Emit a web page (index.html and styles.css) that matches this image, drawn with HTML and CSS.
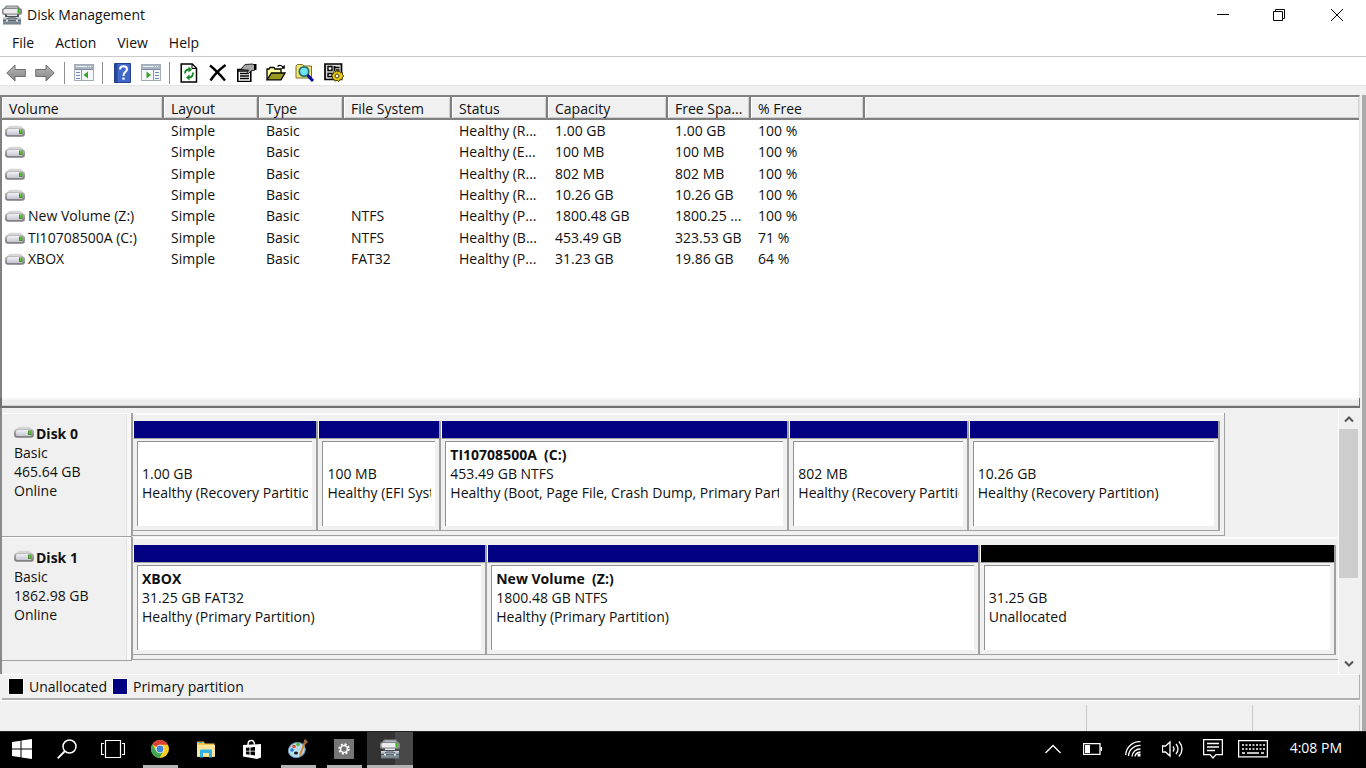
FILE: index.html
```html
<!DOCTYPE html>
<html lang="en">
<head>
<meta charset="utf-8">
<title>Disk Management</title>
<link rel="stylesheet" href="styles.css">
</head>
<body>
<svg class="defs" aria-hidden="true">
  <defs>
    <linearGradient id="metal" x1="0" y1="0" x2="0" y2="1">
      <stop offset="0" stop-color="#f0f0f6"/><stop offset="1" stop-color="#c6c6d2"/>
    </linearGradient>
    <linearGradient id="rim" x1="0" y1="0" x2="0" y2="1">
      <stop offset="0" stop-color="#b4b4b6"/><stop offset="1" stop-color="#7c7c80"/>
    </linearGradient>
    <linearGradient id="steel" x1="0" y1="0" x2="0" y2="1">
      <stop offset="0" stop-color="#a9b6bf"/><stop offset="1" stop-color="#6d7b85"/>
    </linearGradient>
    <linearGradient id="arrow" x1="0" y1="0" x2="0" y2="1">
      <stop offset="0" stop-color="#b8b8b8"/><stop offset="1" stop-color="#858585"/>
    </linearGradient>
    <symbol id="drive" viewBox="0 0 20 12">
      <path d="M1 5Q3 .8 6 .8h8q3 0 5 4.200z" fill="#d6d6d6"/>
      <rect x="0" y="3.200" width="20" height="8.500" rx="3" fill="url(#rim)"/>
      <rect x="2" y="4" width="15.500" height="6" rx="1.500" fill="url(#metal)"/>
      <path d="M14 4.500h3.500V9H14z" fill="#4b8a35"/><path d="M15 5h1.500v3H15z" fill="#58cc2c"/>
    </symbol>
    <symbol id="diskmgmt" viewBox="0 0 20 20">
      <path d="M4 .5h12l3 4H1z" fill="#83888b"/>
      <path d="M5 1.500h10l1 1.500H4z" fill="#b5babc"/>
      <rect x="0" y="3" width="20" height="7" rx="2.500" fill="#85888b"/>
      <rect x="1.500" y="4" width="16.500" height="4.500" rx="1.500" fill="#ececef"/>
      <path d="M15.500 4h2.200v4.500h-2.200z" fill="#35b512"/>
      <path d="M3 9.500h14v3H3z" fill="#4a5156"/><path d="M5 9.500h10v1.500H5z" fill="#e3e8eb"/>
      <path d="M1 12h18v7.500H1z" fill="url(#steel)"/>
      <path d="M1 12h18v1.500H1z" fill="#cbd5db"/>
      <path d="M5 15q0-2 2-2h6q2 0 2 2" fill="none" stroke="#3c464d"/>
      <path d="M1 15.500h18" stroke="#56626b"/>
      <path d="M4 14.500h2v2H4zM14 14.500h2v2h-2z" fill="#e0e8ed"/>
    </symbol>
    <symbol id="console" viewBox="0 0 20 17">
      <rect x="0.5" y="0.5" width="19" height="16" fill="#f5f7fa" stroke="#a3abb6"/>
      <path d="M1 1h18v4H1z" fill="#a9b4c3"/><path d="M2 2.5h11" stroke="#e9eef4"/><path d="M14 2.5h1m1 0h1" stroke="#fff"/>
      <path d="M1 5.5h18" stroke="#808c9d"/>
    </symbol>
  </defs>
</svg>
<main class="window">
  <header class="titlebar">
    <svg class="app-icon"><use href="#diskmgmt"/></svg>
    <h1 class="title">Disk Management</h1>
    <div class="caption">
      <button class="cap" aria-label="Minimize"><svg viewBox="0 0 12 12"><path d="M0 5.500h12"/></svg></button>
      <button class="cap" aria-label="Restore"><svg viewBox="0 0 12 12"><path d="M.5 2.5h9v9h-9zM2.5 2.5v-2h9v9h-2"/></svg></button>
      <button class="cap" aria-label="Close"><svg viewBox="0 0 12 12"><path d="M0 0l12 12M12 0L0 12"/></svg></button>
    </div>
  </header>
  <nav class="menubar">
    <button>File</button><button>Action</button><button>View</button><button>Help</button>
  </nav>
  <div class="toolbar" role="toolbar">
    <button class="tool" aria-label="Back"><svg width="20" height="18" viewBox="0 0 20 18"><path d="M.8 9L9 1v4.500h10.300v7H9V17z" fill="url(#arrow)" stroke="#707070"/></svg></button>
    <button class="tool" aria-label="Forward"><svg width="20" height="18" viewBox="0 0 20 18"><path d="M19.200 9L11 1v4.500H.7v7H11V17z" fill="url(#arrow)" stroke="#707070"/></svg></button>
    <span class="sep"></span>
    <button class="tool" aria-label="Show or hide console tree"><svg width="20" height="17" viewBox="0 0 20 17"><use href="#console"/><path d="M7.500 6v10" stroke="#8c98a8"/><path d="M2 8.500h4M2 11.500h4M2 14.500h4" stroke="#6d8cb5"/><path d="M14 7.500v7L9.500 11z" fill="#37a52c"/></svg></button>
    <span class="sep"></span>
    <button class="tool" aria-label="Help"><svg width="17" height="20" viewBox="0 0 17 20"><path d="M.5.500h16v19H.500z" fill="#4067cb" stroke="#24418e"/><path d="M1 1h2.500v18H1z" fill="#27479b"/><path d="M6 6.500Q6 3.200 9.500 3.200T13 6.300Q13 8 11 9.300 9.500 10.500 9.500 13" fill="none" stroke="#fff" stroke-width="2"/><path d="M8.400 14.500h2.200v2.200H8.400z" fill="#fff"/></svg></button>
    <button class="tool" aria-label="Show or hide action pane"><svg width="20" height="17" viewBox="0 0 20 17"><use href="#console"/><path d="M12.500 6v10" stroke="#8c98a8"/><path d="M14 8.500h4M14 11.500h4M14 14.500h4" stroke="#6d8cb5"/><path d="M5.500 7.500v7L10 11z" fill="#37a52c"/></svg></button>
    <span class="sep"></span>
    <button class="tool" aria-label="Refresh"><svg width="18" height="20" viewBox="0 0 18 20"><path d="M1.200 1h11l4.300 4.300V19H1.200z" fill="#fff" stroke="#000" stroke-width="1.500"/><path d="M12 1v4.500h4.500" fill="none" stroke="#000"/><path d="M5 10.500Q5 6.500 9 6.500M13 9.500Q13 14.500 9 14.500" fill="none" stroke="#118a22" stroke-width="1.800"/><path d="M8.500 3.500v6l3.500-3zM9.500 11.500v6l-3.500-3z" fill="#118a22"/></svg></button>
    <button class="tool" aria-label="Delete"><svg width="18" height="18" viewBox="0 0 18 18"><path d="M1 1.500Q8 7 16 16.500M16.500 1Q7 8 1.500 16.500" fill="none" stroke="#000" stroke-width="2.400"/></svg></button>
    <button class="tool" aria-label="Properties"><svg width="20" height="19" viewBox="0 0 20 19"><path d="M.8 6.500h13v12H.8z" fill="#fff" stroke="#000" stroke-width="1.600"/><path d="M1 8h12.500M3 10.500h9M3 13h9M3 15.500h9" stroke="#000" stroke-width="1.700"/><path d="M4 6l4-4.500 8-.5 2 2v4l-4 1-3 3-1-1 1.500-3H8z" fill="#a8a8a8" stroke="#222"/><path d="M17 1h2.500v6H17z" fill="#000"/></svg></button>
    <button class="tool" aria-label="Open"><svg width="20" height="17" viewBox="0 0 20 17"><path d="M1 15.500V5h2l1-1.500h4L9 5h6v4" fill="#ffffa0" stroke="#000" stroke-width="1.300"/><path d="M1 15.800L5.500 9H19l-4 6.800z" fill="#9a9820" stroke="#000" stroke-width="1.300"/><path d="M11.500 2.500Q14 0 17 3" fill="none" stroke="#000" stroke-width="1.300"/><path d="M18.800.8v4h-4z"/></svg></button>
    <button class="tool" aria-label="Rescan disks"><svg width="20" height="19" viewBox="0 0 20 19"><path d="M1 15V3l1.500-1.500h5L9 3h7.500v12z" fill="#f4e676" stroke="#77702c"/><circle cx="9" cy="8.500" r="4.700" fill="#6fe6ee" stroke="#266c77" stroke-width="1.700"/><path d="M12.500 12l5.500 6" stroke="#0c0ca0" stroke-width="3"/></svg></button>
    <button class="tool" aria-label="More settings"><svg width="20" height="19" viewBox="0 0 20 19"><path d="M1 1h16.500v15.500H1z" fill="#d9d9d9" stroke="#000" stroke-width="1.700"/><path d="M4 3.500h4v4H4zM4 10.500h4v3H4z" fill="#fff" stroke="#000" stroke-width="1.400"/><path d="M10.500 3v5M10.500 4.500h5M12 7h3.500" stroke="#000" stroke-width="1.700"/><path d="M12.300 7l1 2 2-.800 1.200 1.600 2-.300v2.200l1.300 1.300-1.300 1.300-.500 2.200-2 0-1.300 2-1.700-1.300-2 1-1-2-2-.500.600-2-1-1.700 1.800-1.200 0-2 2 .200z" fill="#e6c81a" stroke="#4a4000" stroke-width="1"/><circle cx="13" cy="13" r="1.900" fill="#fff" stroke="#4a4000"/></svg></button>
  </div>

  <div class="content">
    <section class="volumes" aria-label="Volumes">
      <table class="vol-table">
        <colgroup><col class="c-volume"><col class="c-layout"><col class="c-type"><col class="c-fs"><col class="c-status"><col class="c-cap"><col class="c-free"><col class="c-pct"><col></colgroup>
        <thead><tr><th>Volume</th><th>Layout</th><th>Type</th><th>File System</th><th>Status</th><th>Capacity</th><th>Free Spa...</th><th>% Free</th><th></th></tr></thead>
        <tbody>
          <tr><td class="name"><svg class="drive"><use href="#drive"/></svg></td><td>Simple</td><td>Basic</td><td></td><td>Healthy (R...</td><td>1.00 GB</td><td>1.00 GB</td><td>100 %</td><td></td></tr>
          <tr><td class="name"><svg class="drive"><use href="#drive"/></svg></td><td>Simple</td><td>Basic</td><td></td><td>Healthy (E...</td><td>100 MB</td><td>100 MB</td><td>100 %</td><td></td></tr>
          <tr><td class="name"><svg class="drive"><use href="#drive"/></svg></td><td>Simple</td><td>Basic</td><td></td><td>Healthy (R...</td><td>802 MB</td><td>802 MB</td><td>100 %</td><td></td></tr>
          <tr><td class="name"><svg class="drive"><use href="#drive"/></svg></td><td>Simple</td><td>Basic</td><td></td><td>Healthy (R...</td><td>10.26 GB</td><td>10.26 GB</td><td>100 %</td><td></td></tr>
          <tr><td class="name"><svg class="drive"><use href="#drive"/></svg>New Volume (Z:)</td><td>Simple</td><td>Basic</td><td>NTFS</td><td>Healthy (P...</td><td>1800.48 GB</td><td>1800.25 ...</td><td>100 %</td><td></td></tr>
          <tr><td class="name"><svg class="drive"><use href="#drive"/></svg>TI10708500A (C:)</td><td>Simple</td><td>Basic</td><td>NTFS</td><td>Healthy (B...</td><td>453.49 GB</td><td>323.53 GB</td><td>71 %</td><td></td></tr>
          <tr><td class="name"><svg class="drive"><use href="#drive"/></svg>XBOX</td><td>Simple</td><td>Basic</td><td>FAT32</td><td>Healthy (P...</td><td>31.23 GB</td><td>19.86 GB</td><td>64 %</td><td></td></tr>
        </tbody>
      </table>
    </section>
    <div class="splitter"></div>
    <section class="disks" aria-label="Disks">
      <div class="disk-list">
        <article class="disk">
          <div class="disk-label"><h2><svg class="drive"><use href="#drive"/></svg>Disk 0</h2><p>Basic</p><p>465.64 GB</p><p>Online</p></div>
          <div class="track"><div class="parts" style="width:90.6%">
            <div class="part" style="flex-grow:185"><div class="bar"></div><div class="box"><p class="vol"></p><p>1.00 GB</p><p>Healthy (Recovery Partition)</p></div></div>
            <div class="part" style="flex-grow:122"><div class="bar"></div><div class="box"><p class="vol"></p><p>100 MB</p><p>Healthy (EFI System Partition)</p></div></div>
            <div class="part" style="flex-grow:349"><div class="bar"></div><div class="box"><p class="vol">TI10708500A&nbsp; (C:)</p><p>453.49 GB NTFS</p><p>Healthy (Boot, Page File, Crash Dump, Primary Partition)</p></div></div>
            <div class="part" style="flex-grow:179"><div class="bar"></div><div class="box"><p class="vol"></p><p>802 MB</p><p>Healthy (Recovery Partition)</p></div></div>
            <div class="part" style="flex-grow:251"><div class="bar"></div><div class="box"><p class="vol"></p><p>10.26 GB</p><p>Healthy (Recovery Partition)</p></div></div>
          </div></div>
        </article>
        <article class="disk">
          <div class="disk-label"><h2><svg class="drive"><use href="#drive"/></svg>Disk 1</h2><p>Basic</p><p>1862.98 GB</p><p>Online</p></div>
          <div class="track"><div class="parts open" style="width:100%">
            <div class="part" style="flex-grow:354"><div class="bar"></div><div class="box"><p class="vol">XBOX</p><p>31.25 GB FAT32</p><p>Healthy (Primary Partition)</p></div></div>
            <div class="part" style="flex-grow:493"><div class="bar"></div><div class="box"><p class="vol">New Volume&nbsp; (Z:)</p><p>1800.48 GB NTFS</p><p>Healthy (Primary Partition)</p></div></div>
            <div class="part" style="flex-grow:356"><div class="bar free"></div><div class="box"><p class="vol"></p><p>31.25 GB</p><p>Unallocated</p></div></div>
          </div></div>
        </article>
      </div>
      <div class="scrollbar">
        <button aria-label="Scroll up"><svg viewBox="0 0 10 8"><path d="M1 6.500l4-4 4 4"/></svg></button>
        <div class="thumb"></div>
        <button class="down" aria-label="Scroll down"><svg viewBox="0 0 10 8"><path d="M1 1.500l4 4 4-4"/></svg></button>
      </div>
    </section>
    <div class="legend"><span class="key unalloc"></span><span>Unallocated</span><span class="key primary"></span><span>Primary partition</span></div>
    <footer class="status"><span></span><span></span><span></span></footer>
  </div>
</main>

<nav class="taskbar">
  <button class="task start" aria-label="Start"><svg width="20" height="20" viewBox="0 0 20 20"><path d="M0 3l8.500-1.200v7.700H0zM9.500 1.600L20 0v9.500H9.500zM0 10.500h8.500v7.700L0 17zM9.500 10.500H20V20L9.500 18.400z" fill="#fff"/></svg></button>
  <button class="task" aria-label="Search"><svg width="20" height="20" viewBox="0 0 20 20"><circle cx="12.500" cy="7.500" r="6.500" fill="none" stroke="#fff" stroke-width="1.500"/><path d="M8 12L.7 19.300" stroke="#fff" stroke-width="1.800"/></svg></button>
  <button class="task view" aria-label="Task view"><svg width="24" height="18" viewBox="0 0 24 18"><path d="M4.500.500h15v17h-15zM3 3.500H.500v11H3M21 3.500h2.500v11H21" fill="none" stroke="#fff" stroke-width="1.200"/></svg></button>
  <button class="task running" aria-label="Chrome"><svg width="18" height="18" viewBox="0 0 18 18"><circle cx="9" cy="9" r="9" fill="#f9cd2a"/><path d="M9 9L1.200 4.500A9 9 0 0 1 16.800 4.700H9z" fill="#dc4437"/><path d="M1.200 4.500A9 9 0 0 0 8.500 18L12.500 11 9 9 5.300 11z" fill="#3fa653"/><circle cx="9" cy="9" r="4.300" fill="#f5f5f5"/><circle cx="9" cy="9" r="3.400" fill="#4086d8"/></svg></button>
  <button class="task" aria-label="File Explorer"><svg width="18" height="17" viewBox="0 0 18 17"><path d="M0 1.500Q0 .5 1 .5h5.500L8 2.500h9.500V16H0z" fill="#f3c64f"/><path d="M0 4h18v11.500H0z" fill="#fde59a"/><path d="M1.500 1.500h4" stroke="#35a3df"/><path d="M3 16.500V9.500Q3 8.500 4 8.500h10q1 0 1 1v7h-3V12H6v4.500z" fill="#2fb4ea"/></svg></button>
  <button class="task" aria-label="Store"><svg width="18" height="20" viewBox="0 0 18 20"><path d="M5 6Q5 1.500 8 1.500q3-.500 3.500 4" fill="none" stroke="#fff" stroke-width="1.500"/><path d="M0 6l18-1v13.500L14 20 0 17.500z" fill="#fff"/><path d="M3 8.800l3.500-.3v3.200H3zM7.500 8.400l4.500-.4v3.700H7.500zM3 12.500h3.500v3.200L3 15.200zM7.500 12.500H12v3.900l-4.500-.6z"/></svg></button>
  <button class="task running" aria-label="Paint"><svg width="20" height="20" viewBox="0 0 20 20"><ellipse cx="8.800" cy="11" rx="8.500" ry="7.500" transform="rotate(-20 9 11)" fill="#b9dced" stroke="#6596b3"/><ellipse cx="8" cy="14" rx="2" ry="1.500" fill="#101820"/><circle cx="4" cy="11" r="1.800" fill="#2c7bd6"/><circle cx="6" cy="7.500" r="1.800" fill="#df4b35"/><circle cx="10" cy="5.500" r="1.800" fill="#55b739"/><path d="M12 16.500L16.500 4" stroke="#d9832d" stroke-width="2"/><path d="M15.500 4.500L16 1l1.500-1L20 3l-2.500 2.500z" fill="#96673b"/></svg></button>
  <button class="task running" aria-label="Settings"><svg width="20" height="20" viewBox="0 0 20 20"><path d="M0 0h20v20H0z" fill="#757575"/><circle cx="10" cy="10" r="4.700" fill="none" stroke="#fff" stroke-width="2" stroke-dasharray="2 1.690"/><circle cx="10" cy="10" r="3.400" fill="none" stroke="#fff" stroke-width="1.400"/></svg></button>
  <button class="task running active" aria-label="Disk Management"><svg width="20" height="20"><use href="#diskmgmt"/></svg></button>
  <div class="tray">
    <button aria-label="Show hidden icons"><svg width="16" height="10" viewBox="0 0 16 10"><path d="M.5 9L8 1.500 15.500 9"/></svg></button>
    <button aria-label="Battery"><svg width="19" height="12" viewBox="0 0 19 12"><path d="M.5.500h16.500v11H.500zM18.500 4v4"/><path class="solid" d="M2 2h5v8H2z"/></svg></button>
    <button aria-label="Network"><svg width="16" height="16" viewBox="0 0 16 16"><path d="M.7 14A14 14 0 0 1 15.500.7M3.500 15A11 11 0 0 1 15.500 4.500M7 15.500a8 8 0 0 1 8.500-7.500M10 15.500q.5-4 5.500-4.500"/><path class="solid" d="M12.500 12.500h3v3h-3z"/></svg></button>
    <button aria-label="Volume"><svg width="21" height="18" viewBox="0 0 21 18"><path d="M.5 6h3L8 2v14l-4.500-4h-3zM11 6.500q2 2.500 0 5M14 4q4 5 0 10M17 1.500q6 7.500 0 15"/></svg></button>
    <button aria-label="Action center"><svg width="20" height="20" viewBox="0 0 20 20"><path d="M.6.600h18.800v15H13L10 19l-3-3.400H.600zM4 4.500h12M4 8h12M4 11.500h8"/></svg></button>
    <button aria-label="Touch keyboard"><svg width="30" height="18" viewBox="0 0 30 18"><path d="M.6.600h28.800v16.300H.600z"/><path d="M4 5h23M4 9h23" stroke-dasharray="2 1.500"/><path d="M4 13h3m2 0h12m2 0h3"/></svg></button>
    <time class="clock">4:08 PM</time>
  </div>
</nav>
</body>
</html>
```
FILE: styles.css
```css
* { box-sizing: border-box; }
body {
  margin: 0;
  min-height: 100vh;
  display: flex;
  flex-direction: column;
  background: #f0f0f0;
  color: #101010;
  font: 14px/19px "Open Sans", "Noto Sans", sans-serif;
  overflow: hidden;
}
button { border: 0; padding: 0; background: none; color: inherit; font: inherit; }
h1, h2, p { margin: 0; font-size: inherit; font-weight: normal; }
p { min-height: 19px; white-space: nowrap; overflow: hidden; }
svg { display: block; flex: none; }
.defs { position: absolute; width: 0; height: 0; }

.window { flex: 1; display: flex; flex-direction: column; }
.titlebar { display: flex; align-items: center; height: 29px; background: #fff; padding-left: 2px; gap: 5px; }
.app-icon { width: 20px; height: 20px; }
.title { flex: 1; }
.caption { display: flex; }
.cap { width: 56px; height: 29px; display: grid; place-items: center; }
.cap:last-child { width: 59px; }
.cap svg { width: 12px; height: 12px; fill: none; stroke: #000; }
.menubar { display: flex; gap: 21px; padding: 0 12px; height: 28px; align-items: center; background: #fff; border-bottom: 1px solid #c9c9ce; }
.toolbar { display: flex; align-items: center; gap: 9px; height: 29px; padding: 3px 6px 0; background: #fff; border-bottom: 1px solid #e3e3e3; }
.tool { display: grid; place-items: center; width: 20px; height: 22px; }
.sep { width: 1px; height: 22px; background: #8e8e8e; }
.sep ~ .sep { margin-left: -1px; }

.content { flex: 1; display: flex; flex-direction: column; margin-top: 9px; border-right: 4px solid #aaa; padding-right: 2px; }
.volumes { flex: 1; background: #fff; border: 2px solid #808080; border-width: 2px 0 0 2px; border-right: 1px solid #e3e3e3; }
.vol-table { width: 100%; height: 172px; table-layout: fixed; border-collapse: separate; border-spacing: 0; }
.c-volume { width: 162px; }
.c-layout { width: 95px; }
.c-type { width: 85px; }
.c-fs { width: 108px; }
.c-status { width: 96px; }
.c-cap { width: 120px; }
.c-free { width: 83px; }
.c-pct { width: 114px; }
th, td { padding: 0 0 0 7px; text-align: left; font-weight: normal; white-space: nowrap; overflow: hidden; }
th { height: 23px; padding-top: 1px; background: #f0f0f0; border-right: 2px solid #808080; border-bottom: 2px solid #808080; box-shadow: inset 1px 1px #fff, inset -1px -1px #cfcfcf; }
th:last-child { border-right: 0; }
td.name { padding-left: 3px; }
.drive { display: inline-block; width: 20px; height: 12px; margin-right: 3px; vertical-align: -1px; }

.splitter { height: 10px; background: #ececec; border: solid #707070; border-width: 0 1px 2px 2px; box-shadow: inset 0 2px #f6f6f6, inset 0 -1px #cfcfcf; }
.disks { display: flex; height: 266px; border-left: 2px solid #8a8a8a; }
.disk-list { flex: 1; padding-top: 5px; min-width: 0; }
.disk { display: flex; height: 124px; }
.disk-label { width: 130px; padding: 11px 0 0 12px; border: 1px solid #a0a0a0; border-width: 0 1px 1px 0; box-shadow: inset 0 1px #fff, inset -4px 0 #f8f8f8, inset -5px 0 #e2e2e2; }
.disk-label h2 { font-weight: 700; white-space: nowrap; }
.disk-label .drive { margin-right: 2px; vertical-align: 1px; }
.track { flex: 1; min-width: 0; }
.parts { display: flex; height: 123px; padding: 8px 4px 4px 0; border: 1px solid #a0a0a0; border-width: 0 1px 1px 1px; box-shadow: inset 0 2px #fafafa; }
.parts.open { padding-right: 2px; border-right: 0; }
.part { flex: 1 1 0; min-width: 0; display: flex; flex-direction: column; border: 2px solid #a0a0a0; border-width: 0 2px 1px 0; }
.bar { height: 18px; background: #000080; border-bottom: 1px solid #a0a0a0; border-left: 1px solid #fff; }
.bar.free { background: #000; }
.box { flex: 1; margin: 2px 4px 4px 4px; padding: 3px 4px 0 4px; background: #fff; border: 1px solid #909090; border-width: 1px 0 0 1px; }
.vol { font-weight: 700; }
.scrollbar { width: 22px; display: flex; flex-direction: column; background: #f0f0f0; border-left: 1px solid #fff; }
.scrollbar button { width: 19px; height: 21px; display: grid; place-items: center; }
.scrollbar svg { width: 10px; height: 8px; fill: none; stroke: #555; stroke-width: 2; }
.scrollbar .down { margin-top: auto; }
.thumb { height: 149px; margin-right: 2px; background: #cdcdcd; }
.legend { display: flex; align-items: center; gap: 5px; height: 26px; padding-left: 6px; margin-left: 2px; border: 1px solid #b0b0b0; border-top-color: #fff; border-left: 0; border-bottom-width: 2px; }
.key { width: 14px; height: 15px; border: 1px solid #fff; box-sizing: content-box; }
.unalloc { background: #000; }
.primary { background: #000080; }
.status { display: flex; height: 31px; padding-top: 4px; border-top: 1px solid #fff; }
.status span { border-right: 1px solid #c8c8c8; width: 107px; }
.status span:first-child { flex: 1; }
.status span:nth-child(2) { width: 166px; }

.taskbar { display: flex; height: 37px; background: #000; color: #fff; border-top: 1px solid #222; }
.task { width: 46px; display: grid; place-items: center; border-bottom: 3px solid transparent; padding-top: 1px; }
.task.start { width: 44px; }
.task.view { margin-right: 1px; }
.task.running { background: linear-gradient(#b4b4b4, #b4b4b4) bottom / 35px 3px no-repeat border-box; }
.task.active { background: linear-gradient(90deg, #333 60%, #484848 60%); border-bottom-color: #b4b4b4; }
.tray { display: flex; align-items: center; margin-left: auto; padding: 0 24px 2px 0; }
.tray button { width: 40px; height: 34px; display: grid; place-items: center; }
.tray svg { fill: none; stroke: #fff; stroke-width: 1.3; }
.tray .solid { fill: #fff; stroke: none; }
.clock { padding: 0 0 3px 17px; }
```
